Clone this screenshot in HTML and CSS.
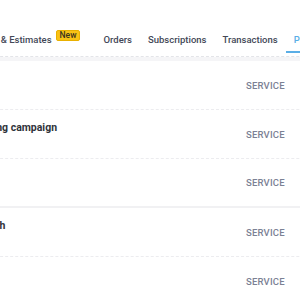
FILE: index.html
```html
<!DOCTYPE html>
<html lang="en">
<head>
	<meta charset="UTF-8">
	<title>Products</title>
	<link rel="stylesheet" href="styles.css">
</head>
<body>
	<div class="page">
		<nav class="tabs">
			<a class="tab">Quotes &amp; Estimates <span class="badge">New</span></a>
			<a class="tab">Orders</a>
			<a class="tab">Subscriptions</a>
			<a class="tab">Transactions</a>
			<a class="tab active">Products</a>
		</nav>
		<div class="list">
			<div class="row">
				<div class="name"><div class="title">Design</div><div class="sub"></div></div>
				<div class="type">SERVICE</div>
			</div>
			<div class="row">
				<div class="name"><div class="title">Marketing campaign</div><div class="sub"></div></div>
				<div class="type">SERVICE</div>
			</div>
			<div class="row split">
				<div class="name"><div class="title">Hosting</div><div class="sub"></div></div>
				<div class="type">SERVICE</div>
			</div>
			<div class="row">
				<div class="name"><div class="title">Approach</div><div class="sub"></div></div>
				<div class="type">SERVICE</div>
			</div>
			<div class="row">
				<div class="name"><div class="title">Support</div><div class="sub"></div></div>
				<div class="type">SERVICE</div>
			</div>
		</div>
	</div>
</body>
</html>
```
FILE: styles.css
```css
*{margin: 0; padding: 0; box-sizing: border-box;}
html, body{width: 100%; height: 100%; overflow: hidden; background: #fff;}
body{font-family: Roboto, "Liberation Sans", sans-serif; color: #2f333b;}
.page{width: 520px; margin-left: -40px;}
.tabs{display: flex; align-items: flex-end; height: 57px; padding: 0 0 3px 0; border-bottom: 1px dashed #e3e4e8;}
.tab{display: flex; align-items: center; padding: 0 8px 4px; line-height: 14px; font-size: 9.5px; font-weight: 500; color: #434857; border-bottom: 2px solid transparent;}
.tab.active{color: #5aaee6; border-bottom-color: #5aaee6;}
.badge{position: relative; top: -5px; margin: 0 7px 0 4px; padding: 0 3px; line-height: 9px; background: #f8c215; color: #3a3320; font-size: 8.5px; font-weight: 500; border-radius: 2px; border: 1px solid #e9b000;}
.list{border-top: 4px solid #f5f5f7;}
.row{display: flex; align-items: center; height: 49px; border-bottom: 1px dashed #ececef;}
.row.split{border-bottom: 2px solid #f1f1f3;}
.name{flex: none; width: 286px;}
.title{font-size: 10.5px; font-weight: 700; color: #30333a; line-height: 14px;}
.sub{height: 12px;}
.type{font-size: 9.5px; font-weight: 500; color: #7b8194; letter-spacing: .2px;}
```
